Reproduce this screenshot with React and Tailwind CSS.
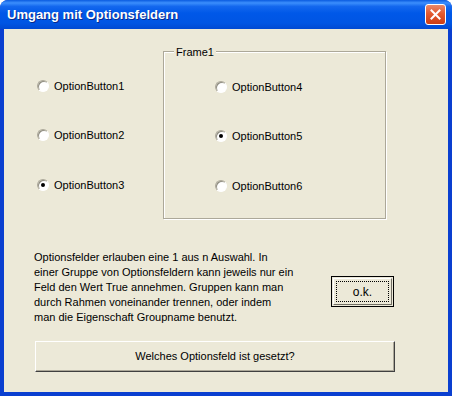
import React from "react";

const font = { fontFamily: '"Liberation Sans", Arial, sans-serif' };

function Radio({ label, checked }) {
  return (
    <div className="flex h-4 items-center gap-[5px]">
      <span className="relative flex h-[12px] w-[12px] items-center justify-center rounded-full border border-[#ACA899] border-b-white border-r-white bg-white shadow-[inset_1px_1px_0_#8f8d80]">
        {checked && <span className="h-[4px] w-[4px] rounded-full bg-black" />}
      </span>
      <span className="text-[11px] leading-4 text-black">{label}</span>
    </div>
  );
}

function RadioColumn({ items }) {
  return (
    <div className="flex flex-col pt-[27px]">
      <Radio {...items[0]} />
      <div className="mt-[33px]">
        <Radio {...items[1]} />
      </div>
      <div className="mt-[34px]">
        <Radio {...items[2]} />
      </div>
    </div>
  );
}

export default function App() {
  return (
    <div className="flex h-[396px] w-[452px] flex-col overflow-hidden rounded-t-[8px] bg-[#0A3FD0]" style={font}>
      {/* title bar */}
      <div className="flex h-[29px] shrink-0 items-center justify-between bg-[linear-gradient(to_bottom,#0A5BE0_0%,#3C8FFC_10%,#1468EE_22%,#0058E8_45%,#0055E3_80%,#0049D2_100%)] pl-[7px] pr-[6px]">
        <span className="text-[13px] font-bold text-white [text-shadow:1px_1px_0_#0A2A8A]">
          Umgang mit Optionsfeldern
        </span>
        <div className="flex h-[21px] w-[21px] items-center justify-center rounded-[3px] border border-white bg-[linear-gradient(to_bottom,#E9896A_0%,#E25A30_45%,#CC3D14_100%)]">
          <svg width="11" height="11" viewBox="0 0 11 11">
            <path d="M1.5 1.5 L9.5 9.5 M9.5 1.5 L1.5 9.5" stroke="white" strokeWidth="2" strokeLinecap="square" />
          </svg>
        </div>
      </div>

      {/* client area */}
      <div className="mx-[4px] mb-[4px] flex flex-1 flex-col bg-[#ECE9D8]">
        <div className="flex pt-[22px]">
          <div className="w-[159px] pl-[33px]">
            <RadioColumn
              items={[
                { label: "OptionButton1" },
                { label: "OptionButton2" },
                { label: "OptionButton3", checked: true },
              ]}
            />
          </div>
          <div className="relative h-[168px] w-[223px] border border-[#ACA899] shadow-[1px_1px_0_#fff,inset_1px_1px_0_#fff]">
            <span className="absolute -top-[8px] left-[10px] bg-[#ECE9D8] px-[2px] text-[11px] leading-4 text-black">
              Frame1
            </span>
            <div className="pl-[51px]">
              <RadioColumn
                items={[
                  { label: "OptionButton4" },
                  { label: "OptionButton5", checked: true },
                  { label: "OptionButton6" },
                ]}
              />
            </div>
          </div>
        </div>

        <div className="mt-[31px] flex items-start">
          <p className="w-[327px] pl-[30px] text-[11px] leading-[15px] text-black">
            Optionsfelder erlauben eine 1 aus n Auswahl. In
            <br />
            einer Gruppe von Optionsfeldern kann jeweils nur ein
            <br />
            Feld den Wert True annehmen. Gruppen kann man
            <br />
            durch Rahmen voneinander trennen, oder indem
            <br />
            man die Eigenschaft Groupname benutzt.
          </p>
          <button className="mt-[26px] flex h-[31px] w-[63px] items-center justify-center border border-black bg-[#ECE9D8] p-[1px]">
            <span className="flex h-full w-full items-center justify-center border border-white border-b-[#716F64] border-r-[#716F64] p-[2px]">
              <span className="flex h-full w-full items-center justify-center border border-dotted border-black text-[12px] text-black">
                o.k.
              </span>
            </span>
          </button>
        </div>

        <button className="ml-[31px] mt-[16px] flex h-[31px] w-[360px] items-center justify-center border border-white border-b-[#404040] border-r-[#404040] bg-[#ECE9D8] text-[11px] text-black shadow-[inset_-1px_-1px_0_#ACA899]">
          Welches Optionsfeld ist gesetzt?
        </button>
      </div>
    </div>
  );
}
